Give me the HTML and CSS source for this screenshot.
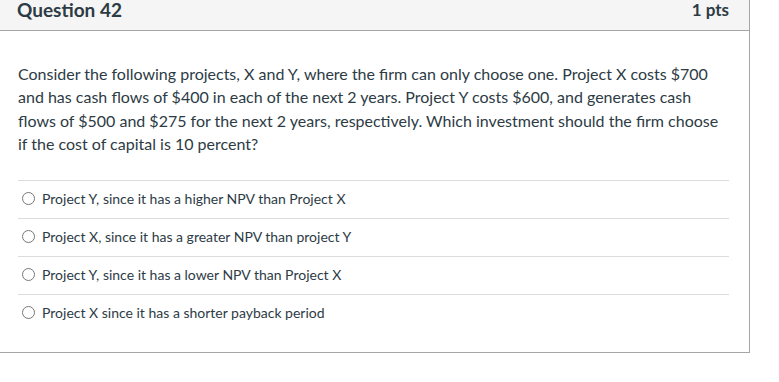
FILE: index.html
```html
<!DOCTYPE html>
<html>
<head>
<meta charset="utf-8">
<link rel="stylesheet" href="styles.css">
</head>
<body>
<div class="question">
  <div class="header">
    <span class="name">Question 42</span>
    <span class="pts">1 pts</span>
  </div>
  <div class="text">Consider the following projects, X and Y, where the firm can only choose one. Project X costs $700 and has cash flows of $400 in each of the next 2 years. Project Y costs $600, and generates cash flows of $500 and $275 for the next 2 years, respectively. Which investment should the firm choose if the cost of capital is 10 percent?</div>
  <div class="answers">
    <label class="answer"><span class="radio"></span><span>Project Y, since it has a higher NPV than Project X</span></label>
    <label class="answer"><span class="radio"></span><span>Project X, since it has a greater NPV than project Y</span></label>
    <label class="answer"><span class="radio"></span><span>Project Y, since it has a lower NPV than Project X</span></label>
    <label class="answer"><span class="radio"></span><span>Project X since it has a shorter payback period</span></label>
  </div>
</div>
</body>
</html>
```
FILE: styles.css
```css
html, body {
  margin: 0;
  padding: 0;
  background: #fff;
}
body {
  font-family: Lato, "Open Sans", sans-serif;
  color: #2d3b45;
}
.question {
  margin: -12px 0 0 -1px;
  border: 1px solid #a5a5a5;
  box-sizing: border-box;
  width: 751px;
}
.header {
  display: flex;
  justify-content: space-between;
  align-items: center;
  background: #f5f5f5;
  border-bottom: 1px solid #a5a5a5;
  height: 42px;
  padding: 0 20px 1px 17px;
  box-sizing: border-box;
  font-weight: bold;
}
.name {
  font-size: 19px;
}
.pts {
  font-size: 17px;
}
.text {
  font-size: 16px;
  line-height: 23.3px;
  padding: 31px 20px 0 18px;
}
.answers {
  margin: 25px 20px 20px 18px;
}
.answer {
  display: flex;
  align-items: center;
  height: 38px;
  border-top: 1px solid #dcdcdc;
  font-size: 14px;
  box-sizing: border-box;
  padding-bottom: 3px;
}
.radio {
  width: 11px;
  height: 11px;
  border: 1px solid #777;
  border-radius: 50%;
  margin: 0 7px 0 4px;
  flex: none;
}
```
